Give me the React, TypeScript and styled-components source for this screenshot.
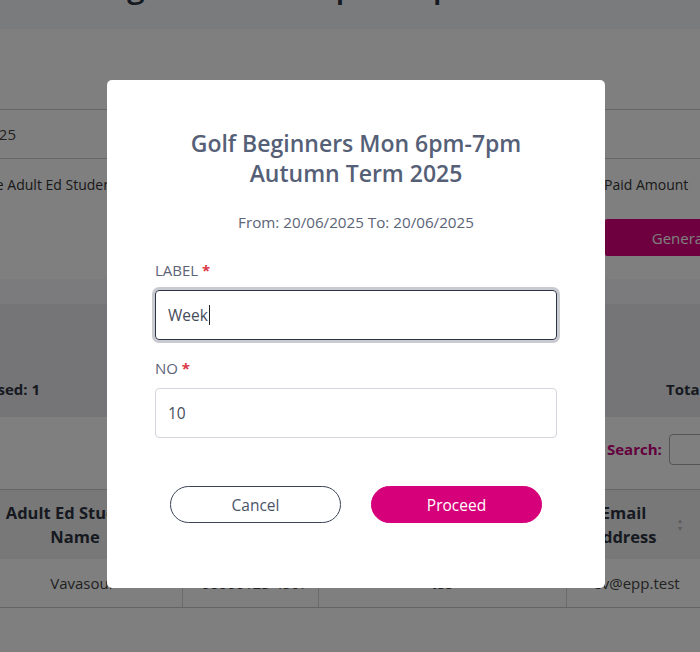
import React from 'react';
import styled, { createGlobalStyle } from 'styled-components';

const Global = createGlobalStyle`
  html, body { margin: 0; padding: 0; background: #fff; }
  body { font-family: "Open Sans", "Noto Sans", sans-serif; }
`;

const Viewport = styled.div`
  width: 700px;
  height: 652px;
  overflow: hidden;
  position: relative;
  background: #fff;
`;

const Page = styled.div`
  width: 1300px;
  margin-left: -300px;
  display: flex;
  flex-direction: column;
  font-family: "Open Sans", "Noto Sans", sans-serif;
  color: #333;
  font-size: 14px;
`;

const Header = styled.header`
  height: 29px;
  background: #f4f6fb;
  overflow: hidden;
`;

const PageTitle = styled.h1`
  margin: -35px 0 0 340px;
  font-size: 32px;
  font-weight: 600;
  line-height: 40px;
  color: #2a3344;
  white-space: nowrap;
`;

const Breadcrumbs = styled.div`
  height: 80px;
  border-bottom: 1px solid #cfcfcf;
`;

const InfoRow = styled.div`
  height: 48px;
  display: flex;
  align-items: center;
  border-bottom: 1px solid #cfcfcf;
`;

const InfoValue = styled.div`
  width: 316px;
  text-align: right;
  font-size: 15px;
  color: #444;
`;

const FilterRow = styled.div`
  height: 50px;
  display: grid;
  grid-template-columns: 664px auto;
  align-items: center;
  padding-left: 240px;
  font-size: 14px;
  color: #333;
  white-space: nowrap;
`;

const ButtonRow = styled.div`
  padding: 10px 0 23px 905px;
  display: flex;
`;

const GenerateButton = styled.button`
  width: 210px;
  height: 37px;
  border: none;
  border-radius: 2px;
  background: #dc0080;
  color: #fff;
  font-family: inherit;
  font-size: 15px;
  padding: 0;
`;

const SummaryTop = styled.div`
  height: 25px;
  background: #f6f6fa;
`;

const Summary = styled.div`
  height: 113px;
  background: #ebebef;
  display: grid;
  grid-template-columns: 340px auto;
  align-items: end;
  font-weight: 700;
  font-size: 15px;
  color: #2d3340;
`;

const SummaryCell = styled.div<{ $align: 'left' | 'right'; $pad?: number }>`
  text-align: ${(p) => p.$align};
  padding-left: ${(p) => p.$pad ?? 0}px;
  height: 38px;
  white-space: nowrap;
`;

const SearchRow = styled.div`
  height: 73px;
  box-sizing: border-box;
  display: flex;
  align-items: center;
  gap: 7px;
  padding: 0 0 8px 907px;
  border-bottom: 1px solid #cccccc;
`;

const SearchLabel = styled.label`
  font-weight: 700;
  font-size: 15px;
  color: #c8007a;
`;

const SearchInput = styled.input`
  width: 200px;
  height: 31px;
  box-sizing: border-box;
  border: 1px solid #aaa;
  border-radius: 4px;
`;

const Table = styled.div`
  padding-left: 267px;
  display: flex;
  flex-direction: column;
`;

const TRow = styled.div<{ $head?: boolean }>`
  display: grid;
  grid-template-columns: 216px 136px 248px 140px 200px;
  height: ${(p) => (p.$head ? 69 : 48)}px;
  background: ${(p) => (p.$head ? '#f0f0f0' : '#fff')};
  border-bottom: ${(p) => (p.$head ? 'none' : '1px solid #c8c8c8')};
`;

const Th = styled.div`
  display: flex;
  align-items: center;
  justify-content: center;
  gap: 20px;
  text-align: center;
  font-weight: 700;
  font-size: 16.5px;
  line-height: 24px;
  color: #2d3340;
  white-space: nowrap;
`;

const Td = styled.div<{ $shift?: number }>`
  display: flex;
  align-items: center;
  justify-content: center;
  padding-left: ${(p) => p.$shift ?? 0}px;
  font-size: 15px;
  color: #444;
  border-right: 1px solid #d6d6d6;
  white-space: nowrap;
`;

const SortIcon = styled.span`
  display: flex;
  flex-direction: column;
  gap: 2px;
  color: #bbb;
  font-size: 7px;
  line-height: 6px;
`;

const Overlay = styled.div`
  position: fixed;
  inset: 0;
  background: rgba(0, 0, 0, 0.5);
  display: flex;
  align-items: flex-start;
  padding: 80px 0 0 107px;
`;

const Modal = styled.div`
  width: 498px;
  box-sizing: border-box;
  background: #fff;
  border-radius: 5px;
  padding: 48px 48px 65px;
  display: flex;
  flex-direction: column;
  font-family: "Open Sans", "Noto Sans", sans-serif;
`;

const ModalTitle = styled.h2`
  margin: 0;
  text-align: center;
  font-size: 23px;
  font-weight: 600;
  line-height: 30px;
  color: #556077;
`;

const DateRange = styled.p`
  margin: 24px 0 0;
  text-align: center;
  font-size: 15.2px;
  line-height: 20px;
  color: #5c6477;
`;

const Field = styled.div<{ $gap: number }>`
  margin-top: ${(p) => p.$gap}px;
  display: flex;
  flex-direction: column;
  gap: 10px;
`;

const Label = styled.label`
  font-size: 15px;
  line-height: 20px;
  color: #5c6477;
`;

const Req = styled.span`
  color: #dc3545;
  font-weight: 700;
`;

const InputBox = styled.div<{ $focused?: boolean }>`
  height: 50px;
  box-sizing: border-box;
  border: 1px solid ${(p) => (p.$focused ? '#2c3548' : '#d3d6dc')};
  border-radius: 4px;
  box-shadow: ${(p) => (p.$focused ? '0 0 0 3px #c9cbd1' : 'none')};
  display: flex;
  align-items: center;
  padding: 0 12px;
  font-size: 15.5px;
  color: #454d5c;
`;

const Caret = styled.span`
  display: inline-block;
  width: 1px;
  height: 20px;
  background: #222;
  margin-left: 1px;
`;

const Actions = styled.div`
  margin-top: 48px;
  display: flex;
  justify-content: center;
  gap: 30px;
`;

const Btn = styled.button<{ $primary?: boolean }>`
  width: 171px;
  height: 37px;
  border-radius: 19px;
  font-family: inherit;
  font-size: 15.5px;
  padding: 0;
  border: 1px solid ${(p) => (p.$primary ? '#d6007a' : '#3b4557')};
  background: ${(p) => (p.$primary ? '#d6007a' : '#fff')};
  color: ${(p) => (p.$primary ? '#fff' : '#4a5468')};
`;

export default function App() {
  return (
    <>
      <Global />
      <Viewport>
        <Page>
          <Header>
            <PageTitle>Manage Class Group Setup</PageTitle>
          </Header>
          <Breadcrumbs />
          <InfoRow>
            <InfoValue>Autumn Term 2025</InfoValue>
          </InfoRow>
          <FilterRow>
            <span>Select the Adult Ed Student</span>
            <span>Paid Amount</span>
          </FilterRow>
          <ButtonRow>
            <GenerateButton>Generate Report</GenerateButton>
          </ButtonRow>
          <SummaryTop />
          <Summary>
            <SummaryCell $align="right">Total Classes Used: 1</SummaryCell>
            <SummaryCell $align="left" $pad={626}>Total Paid: £120.00</SummaryCell>
          </Summary>
          <SearchRow>
            <SearchLabel>Search:</SearchLabel>
            <SearchInput />
          </SearchRow>
          <Table>
            <TRow $head>
              <Th>Adult Ed Student<br />Name</Th>
              <Th>Phone</Th>
              <Th>Classes</Th>
              <Th>
                <span>Email<br />Address</span>
                <SortIcon>
                  <span>▲</span>
                  <span>▼</span>
                </SortIcon>
              </Th>
              <Th>Paid</Th>
            </TRow>
            <TRow>
              <Td $shift={16}>Vavasour</Td>
              <Td>+00000123 4567</Td>
              <Td>t85</Td>
              <Td>ev@epp.test</Td>
              <Td>£120.00</Td>
            </TRow>
          </Table>
        </Page>
        <Overlay>
          <Modal>
            <ModalTitle>
              Golf Beginners Mon 6pm-7pm
              <br />
              Autumn Term 2025
            </ModalTitle>
            <DateRange>From: 20/06/2025 To: 20/06/2025</DateRange>
            <Field $gap={28}>
              <Label>
                LABEL <Req>*</Req>
              </Label>
              <InputBox $focused>
                Week
                <Caret />
              </InputBox>
            </Field>
            <Field $gap={18}>
              <Label>
                NO <Req>*</Req>
              </Label>
              <InputBox>10</InputBox>
            </Field>
            <Actions>
              <Btn>Cancel</Btn>
              <Btn $primary>Proceed</Btn>
            </Actions>
          </Modal>
        </Overlay>
      </Viewport>
    </>
  );
}
